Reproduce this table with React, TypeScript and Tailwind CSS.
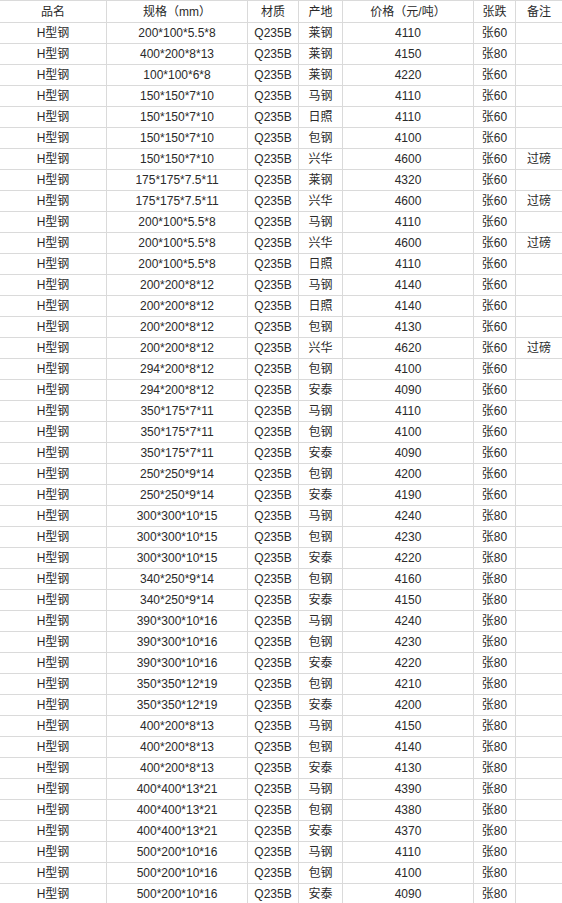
import React from "react";

type Row = [string, string, string, string, string, string];

const specs: Row[] = [
  ["200*100*5.5*8", "莱钢", "4110", "张60", ""],
  ["400*200*8*13", "莱钢", "4150", "张80", ""],
  ["100*100*6*8", "莱钢", "4220", "张60", ""],
  ["150*150*7*10", "马钢", "4110", "张60", ""],
  ["150*150*7*10", "日照", "4110", "张60", ""],
  ["150*150*7*10", "包钢", "4100", "张60", ""],
  ["150*150*7*10", "兴华", "4600", "张60", "过磅"],
  ["175*175*7.5*11", "莱钢", "4320", "张60", ""],
  ["175*175*7.5*11", "兴华", "4600", "张60", "过磅"],
  ["200*100*5.5*8", "马钢", "4110", "张60", ""],
  ["200*100*5.5*8", "兴华", "4600", "张60", "过磅"],
  ["200*100*5.5*8", "日照", "4110", "张60", ""],
  ["200*200*8*12", "马钢", "4140", "张60", ""],
  ["200*200*8*12", "日照", "4140", "张60", ""],
  ["200*200*8*12", "包钢", "4130", "张60", ""],
  ["200*200*8*12", "兴华", "4620", "张60", "过磅"],
  ["294*200*8*12", "包钢", "4100", "张60", ""],
  ["294*200*8*12", "安泰", "4090", "张60", ""],
  ["350*175*7*11", "马钢", "4110", "张60", ""],
  ["350*175*7*11", "包钢", "4100", "张60", ""],
  ["350*175*7*11", "安泰", "4090", "张60", ""],
  ["250*250*9*14", "包钢", "4200", "张60", ""],
  ["250*250*9*14", "安泰", "4190", "张60", ""],
  ["300*300*10*15", "马钢", "4240", "张80", ""],
  ["300*300*10*15", "包钢", "4230", "张80", ""],
  ["300*300*10*15", "安泰", "4220", "张80", ""],
  ["340*250*9*14", "包钢", "4160", "张80", ""],
  ["340*250*9*14", "安泰", "4150", "张80", ""],
  ["390*300*10*16", "马钢", "4240", "张80", ""],
  ["390*300*10*16", "包钢", "4230", "张80", ""],
  ["390*300*10*16", "安泰", "4220", "张80", ""],
  ["350*350*12*19", "包钢", "4210", "张80", ""],
  ["350*350*12*19", "安泰", "4200", "张80", ""],
  ["400*200*8*13", "马钢", "4150", "张80", ""],
  ["400*200*8*13", "包钢", "4140", "张80", ""],
  ["400*200*8*13", "安泰", "4130", "张80", ""],
  ["400*400*13*21", "马钢", "4390", "张80", ""],
  ["400*400*13*21", "包钢", "4380", "张80", ""],
  ["400*400*13*21", "安泰", "4370", "张80", ""],
  ["500*200*10*16", "马钢", "4110", "张80", ""],
  ["500*200*10*16", "包钢", "4100", "张80", ""],
  ["500*200*10*16", "安泰", "4090", "张80", ""],
].map((r) => ["H型钢", r[0], "Q235B", r[1], r[2], r[3], r[4]] as unknown as Row);

const headers = ["品名", "规格（mm）", "材质", "产地", "价格（元/吨）", "张跌", "备注"];

function Cell({ children, last }: { children?: React.ReactNode; last?: boolean }) {
  return (
    <div
      className={
        "flex items-center justify-center overflow-hidden whitespace-nowrap " +
        (last ? "" : "border-r border-[#dadada]")
      }
    >
      {children}
    </div>
  );
}

export default function App() {
  return (
    <div
      className="w-[562px] bg-white text-[12px] text-[#2a2a2a] border-t border-[#dadada]"
      style={{ fontFamily: '"Liberation Sans", "Noto Sans CJK SC", sans-serif' }}
    >
      <div className="grid grid-cols-[107px_141px_51px_44px_131px_42px_46px] h-[22px] border-b border-[#dadada]">
        {headers.map((h, i) => (
          <Cell key={i} last={i === headers.length - 1}>
            {h}
          </Cell>
        ))}
      </div>
      {specs.map((row, ri) => (
        <div
          key={ri}
          className="grid grid-cols-[107px_141px_51px_44px_131px_42px_46px] h-[21px] border-b border-[#dadada]"
        >
          {(row as unknown as string[]).map((c, ci) => (
            <Cell key={ci} last={ci === 6}>
              {c}
            </Cell>
          ))}
        </div>
      ))}
    </div>
  );
}
